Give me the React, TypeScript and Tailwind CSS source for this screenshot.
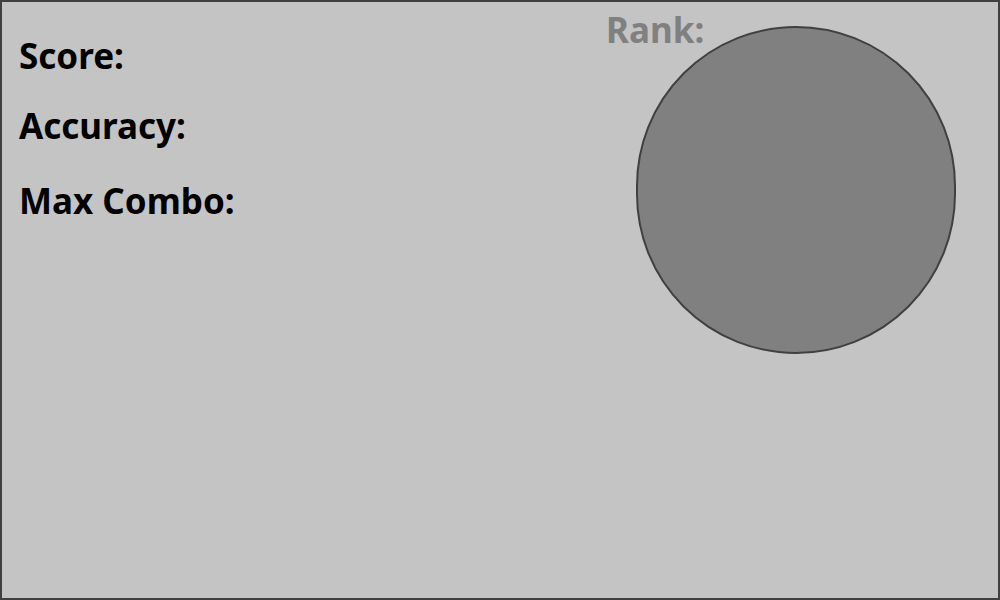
export default function App() {
  return (
    <div
      className="flex h-[600px] w-[1000px] border-2 border-[#404040] bg-[#c4c4c4]"
      style={{ fontFamily: '"Noto Sans", "Open Sans", sans-serif' }}
    >
      {/* Stats column */}
      <div className="flex w-[604px] flex-col pl-[17px] pt-[30px] text-[35px] leading-[48px] font-bold text-black">
        <p>Score:</p>
        <p className="mt-[22px]">Accuracy:</p>
        <p className="mt-[27px]">Max Combo:</p>
      </div>
      {/* Rank */}
      <div className="flex flex-col pt-[4px]">
        <p className="text-[35px] leading-[48px] font-bold text-[#808080]">Rank:</p>
        <div className="-mt-[28px] ml-[30px] h-[328px] w-[320px] rounded-full border-2 border-[#404040] bg-[#808080]" />
      </div>
    </div>
  );
}
